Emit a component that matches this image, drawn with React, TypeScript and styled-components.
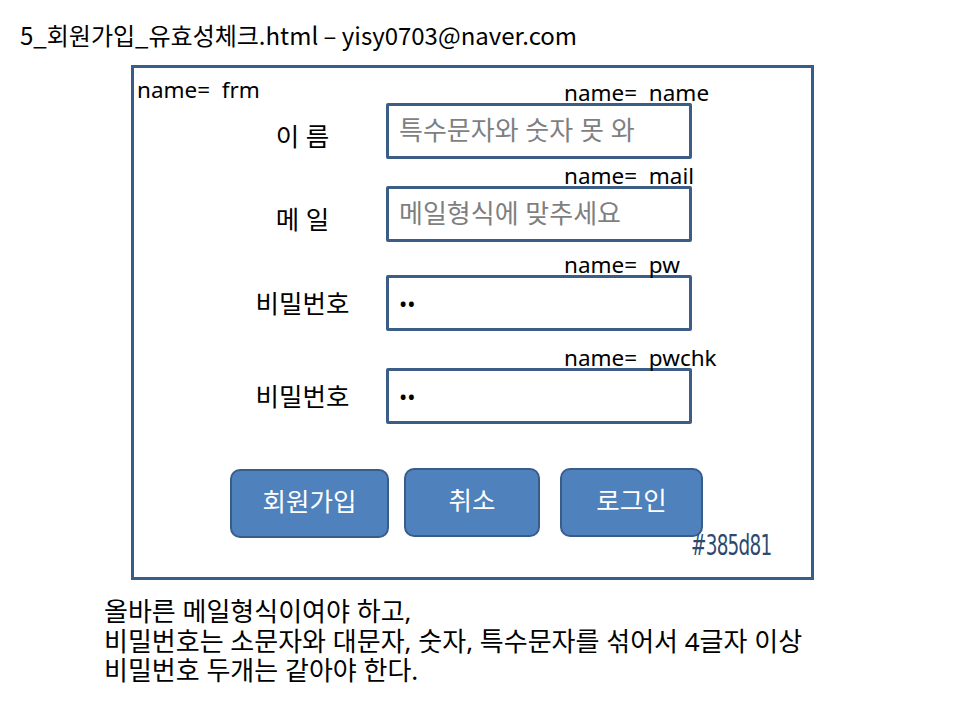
import styled, { createGlobalStyle } from "styled-components";

const GlobalStyle = createGlobalStyle`
  body {
    margin: 0;
    background: #ffffff;
    font-family: "Noto Sans", "Noto Sans CJK KR", sans-serif;
    color: #000000;
  }
`;

type Field = {
  label: string;
  name: string;
  type: "text" | "password";
  placeholder?: string;
  value?: string;
  top: number;
  labelShift: number;
};

const fields: Field[] = [
  { label: "이 름", name: "name", type: "text", placeholder: "특수문자와 숫자 못 와", top: 1, labelShift: 5 },
  { label: "메 일", name: "mail", type: "text", placeholder: "메일형식에 맞추세요", top: 27, labelShift: 5 },
  { label: "비밀번호", name: "pw", type: "password", value: "ab", top: 33, labelShift: 0 },
  { label: "비밀번호", name: "pwchk", type: "password", value: "ab", top: 37, labelShift: 0 },
];

export default function App() {
  return (
    <Page>
      <GlobalStyle />
      <Title>5_회원가입_유효성체크.html – yisy0703@naver.com</Title>
      <Frame>
        <FrameName>name=&nbsp; frm</FrameName>
        {fields.map((f) => (
          <Row key={f.name} $top={f.top}>
            <Label $shift={f.labelShift}>{f.label}</Label>
            <InputWrap>
              <NameTag>name=&nbsp; {f.name}</NameTag>
              <Input
                type={f.type}
                placeholder={f.placeholder}
                defaultValue={f.value}
                readOnly
              />
            </InputWrap>
          </Row>
        ))}
        <ButtonRow>
          <Button $width={159} $top={1}>회원가입</Button>
          <Button $width={136} $top={0}>취소</Button>
          <Button $width={143} $top={0}>로그인</Button>
          <ColorNote>#385d81</ColorNote>
        </ButtonRow>
      </Frame>
      <Notes>
        <p>올바른 메일형식이여야 하고,</p>
        <p>비밀번호는 소문자와 대문자, 숫자, 특수문자를 섞어서 4글자 이상</p>
        <p>비밀번호 두개는 같아야 한다.</p>
      </Notes>
    </Page>
  );
}

const Page = styled.div`
  width: 960px;
  height: 720px;
  overflow: hidden;
  display: flex;
  flex-direction: column;
`;

const Title = styled.h1`
  margin: 19px 0 0 20px;
  font-family: "Noto Sans CJK KR", "Noto Sans", sans-serif;
  font-size: 24px;
  font-weight: 400;
  line-height: 31px;
  white-space: nowrap;
`;

const Frame = styled.div`
  box-sizing: border-box;
  width: 683px;
  height: 515px;
  margin: 15px 0 0 131px;
  border: 3px solid #385d8a;
  display: flex;
  flex-direction: column;
  padding-left: 3px;
`;

const FrameName = styled.div`
  font-size: 22.5px;
  line-height: 24px;
  padding-top: 10px;
`;

const Row = styled.div<{ $top: number }>`
  display: grid;
  grid-template-columns: 249px 306px;
  align-items: center;
  margin-top: ${(p) => p.$top}px;
`;

const Label = styled.div<{ $shift: number }>`
  padding-left: 82px;
  padding-top: ${(p) => p.$shift * 2}px;
  text-align: center;
  font-size: 25.5px;
  line-height: 30px;
`;

const InputWrap = styled.div`
  position: relative;
`;

const NameTag = styled.span`
  position: absolute;
  left: 178px;
  bottom: 100%;
  font-size: 22.5px;
  line-height: 20px;
  white-space: nowrap;
`;

const Input = styled.input`
  box-sizing: border-box;
  display: block;
  width: 306px;
  height: 56px;
  margin: 0;
  padding: 0 0 0 10px;
  border: 3px solid #3c5d85;
  border-radius: 2px;
  background: #ffffff;
  font-family: "Noto Sans", "Noto Sans CJK KR", sans-serif;
  font-size: 22px;
  color: #000000;
  outline: none;

  &::placeholder {
    color: #7f7f7f;
    font-size: 26px;
  }
`;

const ButtonRow = styled.div`
  position: relative;
  display: flex;
  align-items: flex-start;
  margin: 44px 0 0 93px;
  gap: 15px;

  & > :nth-child(3) {
    margin-left: 5px;
  }
`;

const Button = styled.button<{ $width: number; $top: number }>`
  box-sizing: border-box;
  width: ${(p) => p.$width}px;
  height: 69px;
  margin-top: ${(p) => p.$top}px;
  border: 2px solid #385d8a;
  border-radius: 10px;
  background: #4f81bd;
  color: #ffffff;
  font-family: "Noto Sans", "Noto Sans CJK KR", sans-serif;
  font-size: 25.5px;
  padding: 0 0 8px;
`;

const ColorNote = styled.span`
  position: absolute;
  left: 461px;
  top: 64px;
  font-family: "DejaVu Sans Condensed", "DejaVu Sans", sans-serif;
  font-size: 28px;
  line-height: 28px;
  color: #2d4a6e;
  transform: scaleX(0.73);
  transform-origin: left top;
  letter-spacing: -1px;
`;

const Notes = styled.div`
  margin: 17px 0 0 104px;
  font-size: 26px;
  line-height: 29.5px;

  p {
    margin: 0;
    white-space: nowrap;
  }
`;
